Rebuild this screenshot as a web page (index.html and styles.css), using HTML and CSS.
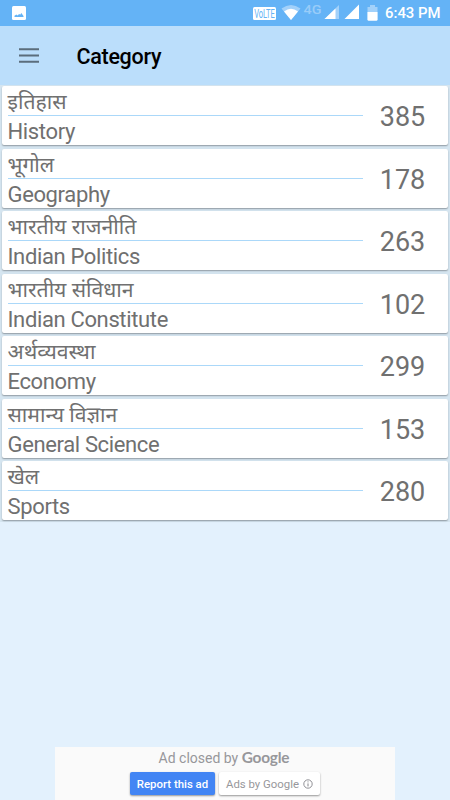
FILE: index.html
```html
<!DOCTYPE html>
<html lang="en">
<head>
<meta charset="utf-8">
<title>Category</title>
<link rel="stylesheet" href="styles.css">
</head>
<body>
<div class="status">
  <svg class="photo" width="14" height="14" viewBox="0 0 14 14"><rect width="14" height="14" rx="1.5" fill="#fff"/><path d="M2.500 11V9.700L4.400 8.600l1 .9L7.200 8l1 .8L9.300 7l2.200 3v1z" fill="#64b3f6"/></svg>
  <svg class="signals" width="142" height="24" viewBox="0 0 142 24">
    <rect x="13" y="7" width="23" height="13" rx="1.5" fill="#fff"/>
    <text class="volte" x="14.200" y="17.800" textLength="20.600" lengthAdjust="spacingAndGlyphs">VoLTE</text>
    <path d="M41.500 8.500Q51 1.500 60.500 8.500L51 20z" fill="#a2d1fa"/>
    <path d="M44 11.400Q51 6 58 11.400L51 20z" fill="#fff"/>
    <text class="network" x="63.500" y="13.600" textLength="18" lengthAdjust="spacingAndGlyphs">4G</text>
    <path d="M99 5v14H84.500z" fill="#a2d1fa"/><path d="M95.500 8.400V19H84.500z" fill="#fff"/>
    <path d="M119 4.500V19h-14.500z" fill="#fff"/>
    <path d="M127.500 7h2.500V5h5v2h2.500v13h-10z" fill="#a2d1fa"/><path d="M127.500 12h10v7.500q0 1.200-1.200 1.200h-7.600q-1.200 0-1.200-1.200z" fill="#fff"/>
  </svg>
  <span class="time">6:43 PM</span>
</div>
<header class="toolbar">
  <svg width="20" height="15" viewBox="0 0 20 15"><path d="M0 1.200h20M0 7.500h20M0 13.700h20" stroke="#5b6d7c" stroke-width="1.900"/></svg>
  <h1>Category</h1>
</header>
<main class="list">
  <section class="card"><div class="names"><p class="hi" lang="hi">इतिहास</p><p class="en">History</p></div><span class="count">385</span></section>
  <section class="card"><div class="names"><p class="hi" lang="hi">भूगोल</p><p class="en">Geography</p></div><span class="count">178</span></section>
  <section class="card"><div class="names"><p class="hi" lang="hi">भारतीय राजनीति</p><p class="en">Indian Politics</p></div><span class="count">263</span></section>
  <section class="card"><div class="names"><p class="hi" lang="hi">भारतीय संविधान</p><p class="en">Indian Constitute</p></div><span class="count">102</span></section>
  <section class="card"><div class="names"><p class="hi" lang="hi">अर्थव्यवस्था</p><p class="en">Economy</p></div><span class="count">299</span></section>
  <section class="card"><div class="names"><p class="hi" lang="hi">सामान्य विज्ञान</p><p class="en">General Science</p></div><span class="count">153</span></section>
  <section class="card"><div class="names"><p class="hi" lang="hi">खेल</p><p class="en">Sports</p></div><span class="count">280</span></section>
</main>
<footer class="ad">
  <p class="closed">Ad closed by <span class="brand">Google</span></p>
  <div class="actions">
    <span class="report">Report this ad</span>
    <span class="why">Ads by Google <svg width="10" height="10" viewBox="0 0 10 10"><circle cx="5" cy="5" r="4.200" fill="none" stroke="#85858a" stroke-width=".9"/><path d="M5 4.400v3M5 2.400v1" stroke="#85858a" stroke-width="1"/></svg></span>
  </div>
</footer>
</body>
</html>
```
FILE: styles.css
```css
* { box-sizing: border-box; }
body {
  margin: 0;
  height: 800px;
  display: flex;
  flex-direction: column;
  background: #e3f1fd;
  font-family: Roboto, "Noto Sans", sans-serif;
  overflow: hidden;
}
h1, p { margin: 0; }
.status {
  height: 26px;
  flex: none;
  display: flex;
  align-items: flex-start;
  background: #64b3f6;
  color: #fff;
}
.photo { margin: 6px 0 0 12px; }
.signals { margin-left: 214px; flex: none; }
.volte { font: 400 12px Roboto, sans-serif; fill: #64b3f6; }
.network { font: 500 13px Roboto, sans-serif; fill: #98ccf9; }
.time {
  margin-left: 3px;
  font-size: 14.9px;
  font-weight: 500;
  line-height: 27px;
  white-space: nowrap;
}
.toolbar {
  height: 59px;
  flex: none;
  display: flex;
  align-items: center;
  padding: 0 19px;
  background: #bbdefb;
}
.toolbar svg { margin-top: -1px; }
.toolbar h1 {
  margin-left: 37.5px;
  padding-top: 1px;
  font-size: 21.5px;
  letter-spacing: -0.3px;
  font-weight: 500;
  color: #000;
}
.list {
  padding: 1px 2px 2px;
  display: flex;
  flex-direction: column;
  gap: 3.5px;
  background: #d5e5f0;
}
.card {
  height: 59px;
  display: flex;
  background: #fff;
  border-radius: 2px;
  box-shadow: 0 1px 1.5px rgba(0, 0, 0, .32);
  color: #707070;
}
.names { width: 355.5px; margin-left: 5.5px; }
.hi {
  height: 30px;
  border-bottom: 1px solid #abd8f9;
  font-size: 21.2px;
  line-height: 31px;
  white-space: nowrap;
}
.en { font-size: 22px; letter-spacing: -0.36px; line-height: 31px; }
.count {
  width: 79px;
  text-align: center;
  font-size: 27px;
  line-height: 62.5px;
}
.ad {
  width: 340px;
  height: 53px;
  margin: auto auto 0 55px;
  background: #fafafa;
  color: #97979b;
}
.closed {
  height: 25px;
  text-align: center;
  font-size: 14px;
  line-height: 22px;
  padding-right: 2px;
  white-space: nowrap;
}
.brand { font-family: Lato, sans-serif; font-weight: 700; font-size: 15.4px; letter-spacing: -0.2px; line-height: 1; }
.actions { display: flex; gap: 4px; padding-left: 75px; }
.report, .why {
  height: 23px;
  border-radius: 2px;
  font-size: 11.4px;
  line-height: 24px;
  text-align: center;
  white-space: nowrap;
  box-shadow: 0 1px 2px rgba(0, 0, 0, .4);
}
.report { width: 85px; background: #4285f4; color: #fff; font-weight: 500; }
.why { width: 101px; background: #fff; display: flex; align-items: center; justify-content: center; gap: 4px; }
```
